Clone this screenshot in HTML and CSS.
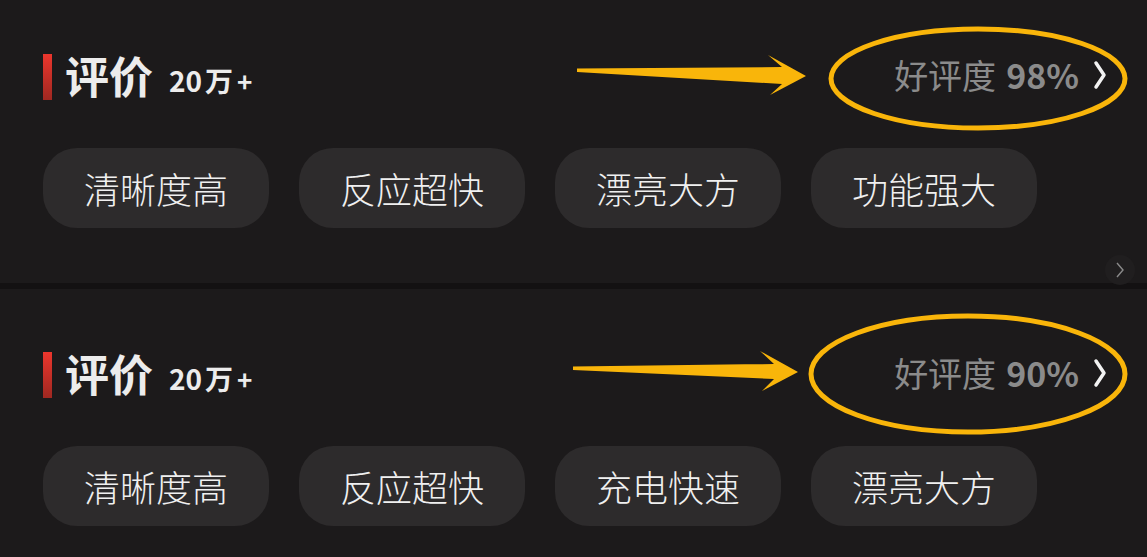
FILE: index.html
```html
<!DOCTYPE html>
<html lang="zh-CN">
<head>
<meta charset="utf-8">
<title>评价</title>
<link rel="stylesheet" href="styles.css">
</head>
<body>
<section class="card card-first">
  <div class="head">
    <div class="title">
      <span class="bar"></span>
      <span class="name">评价</span>
      <span class="count">20<span class="wan">万</span><span class="plus">+</span></span>
    </div>
    <div class="rate">
      <span class="label">好评度</span>
      <span class="pct">98%</span>
      <svg class="chev" width="14" height="30" viewBox="0 0 14 30"><polyline points="3,3 11,15 3,27" fill="none" stroke="#f2f2f2" stroke-width="3.5" stroke-linecap="round" stroke-linejoin="round"/></svg>
    </div>
  </div>
  <div class="chips">
    <span class="chip">清晰度高</span>
    <span class="chip">反应超快</span>
    <span class="chip">漂亮大方</span>
    <span class="chip">功能强大</span>
  </div>
  <svg class="annot" width="1147" height="283" viewBox="0 0 1147 283">
    <polygon points="577,68.5 782,67 768,55 806,76 770,95 782,84 577,72" fill="#f9b50a"/>
    <ellipse cx="978" cy="78.5" rx="147" ry="49.5" fill="none" stroke="#f9b50a" stroke-width="5"/>
  </svg>
  <span class="more"><svg width="10" height="16" viewBox="0 0 10 16"><polyline points="2,1 8,8 2,15" fill="none" stroke="#8a8a8a" stroke-width="1.4"/></svg></span>
</section>
<div class="divider"></div>
<section class="card card-second">
  <div class="head">
    <div class="title">
      <span class="bar"></span>
      <span class="name">评价</span>
      <span class="count">20<span class="wan">万</span><span class="plus">+</span></span>
    </div>
    <div class="rate">
      <span class="label">好评度</span>
      <span class="pct">90%</span>
      <svg class="chev" width="14" height="30" viewBox="0 0 14 30"><polyline points="3,3 11,15 3,27" fill="none" stroke="#f2f2f2" stroke-width="3.5" stroke-linecap="round" stroke-linejoin="round"/></svg>
    </div>
  </div>
  <div class="chips">
    <span class="chip">清晰度高</span>
    <span class="chip">反应超快</span>
    <span class="chip">充电快速</span>
    <span class="chip">漂亮大方</span>
  </div>
  <svg class="annot" width="1147" height="268" viewBox="0 0 1147 268">
    <polygon points="573,77.5 774,75 760,62 798,83 762,102 774,90 573,81" fill="#f9b50a"/>
    <ellipse cx="968" cy="85" rx="157" ry="58" fill="none" stroke="#f9b50a" stroke-width="5"/>
  </svg>
</section>
</body>
</html>
```

FILE: styles.css
```css
html, body {
  margin: 0;
  padding: 0;
}
body {
  width: 1147px;
  height: 557px;
  overflow: hidden;
  background: #1c1a1b;
  font-family: "Noto Sans CJK SC", "Noto Sans", sans-serif;
  color: #ececec;
}
.card {
  position: relative;
  padding: 0 42px 0 43px;
  box-sizing: border-box;
}
.card-first {
  height: 283px;
  padding-top: 45px;
}
.card-second {
  height: 268px;
  padding-top: 54px;
}
.divider {
  height: 6px;
  background: #131112;
}
.head {
  height: 60px;
  display: flex;
  align-items: center;
  justify-content: space-between;
}
.title {
  display: flex;
  align-items: center;
}
.bar {
  width: 9px;
  height: 46px;
  margin-top: 3px;
  margin-right: 13px;
  background: linear-gradient(#ec362d, #9f2821);
}
.name {
  font-size: 44px;
  font-weight: 700;
  line-height: 1;
  color: #ececec;
}
.count {
  display: flex;
  align-items: baseline;
  margin-left: 16px;
  margin-top: 10px;
  font-size: 28px;
  font-weight: 700;
  line-height: 1;
  color: #ececec;
}
.wan {
  margin-left: 3px;
}
.plus {
  margin-left: 4px;
  font-size: 26px;
}
.rate {
  display: flex;
  align-items: center;
  color: #8b8b8b;
  font-size: 34px;
  line-height: 1;
}
.pct {
  margin-left: 10px;
  font-weight: 600;
}
.chev {
  margin-left: 14px;
  margin-right: -2px;
}
.chips {
  display: flex;
  gap: 30px;
  margin-top: 43px;
}
.chip {
  width: 226px;
  height: 80px;
  box-sizing: border-box;
  display: flex;
  align-items: center;
  justify-content: center;
  background: #2d2b2c;
  border-radius: 34px;
  font-size: 36px;
  font-weight: 300;
  color: #f0f0f0;
  line-height: 1;
}
.annot {
  position: absolute;
  left: 0;
  top: 0;
  pointer-events: none;
}
.more {
  position: absolute;
  right: 12px;
  bottom: -2px;
  width: 30px;
  height: 30px;
  border-radius: 50%;
  background: #201e1f;
  display: flex;
  align-items: center;
  justify-content: center;
}
```
